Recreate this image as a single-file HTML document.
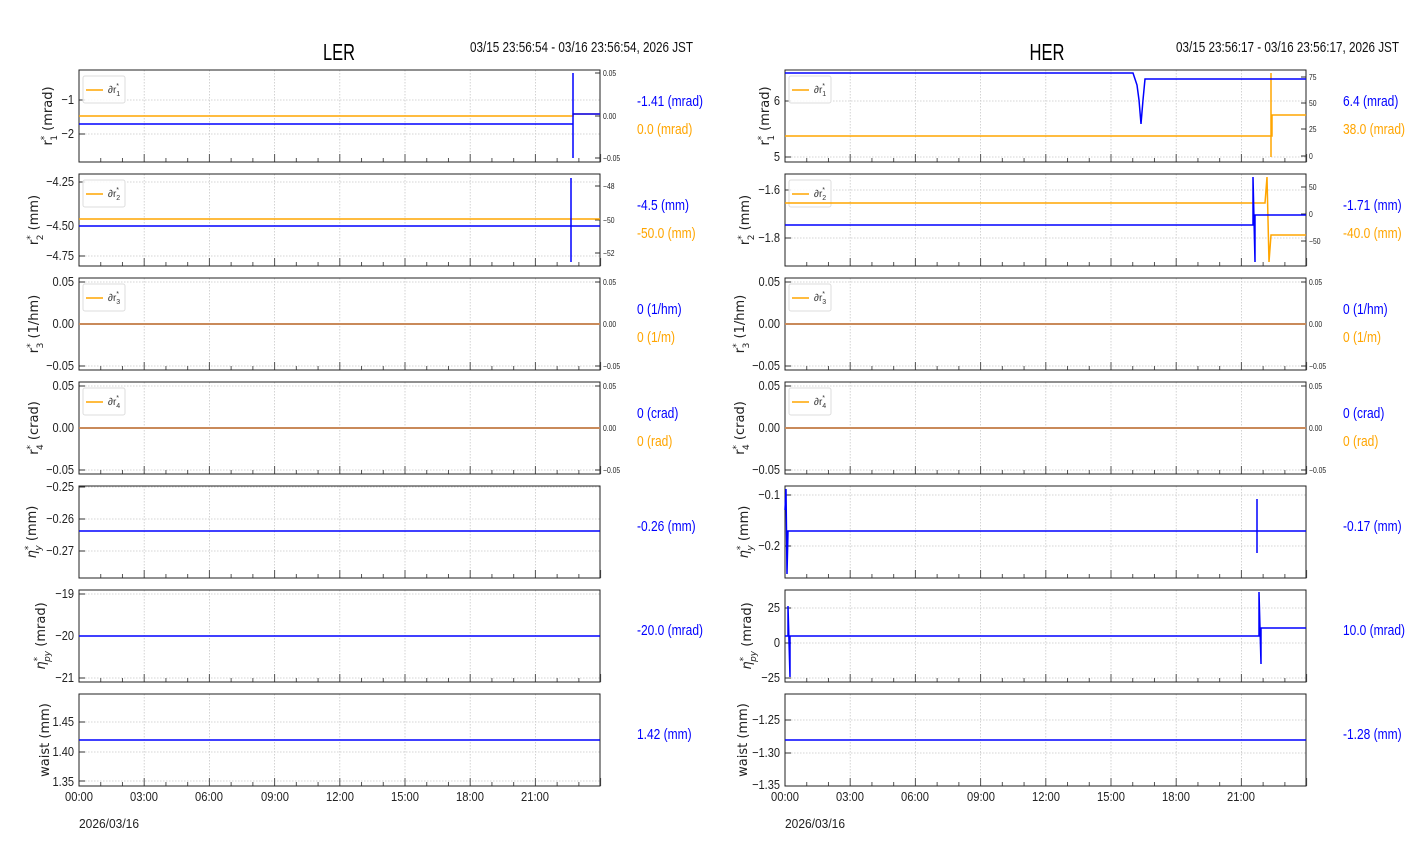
<!DOCTYPE html>
<html><head><meta charset="utf-8">
<style>
html,body{margin:0;padding:0;background:#fff;}
svg{display:block;}
.t{font-family:"Liberation Sans",sans-serif;font-size:13px;fill:#222;}
.s{font-family:"Liberation Sans",sans-serif;font-size:8px;fill:#222;}
.yl{font-family:"DejaVu Sans","Liberation Sans",sans-serif;font-size:13px;fill:#222;}
.v{font-family:"Liberation Sans",sans-serif;font-size:15px;}
.ti{font-family:"Liberation Sans",sans-serif;font-size:23px;fill:#000;}
.hd{font-family:"Liberation Sans",sans-serif;font-size:15px;fill:#111;}
.lg{font-family:"Liberation Sans",sans-serif;font-size:10px;fill:#333;}
.b{fill:none;stroke:#0000ff;stroke-width:1.5;}
.o{fill:none;stroke:#ffa500;stroke-width:1.5;}
</style></head><body>
<svg id="s" width="1412" height="864" viewBox="0 0 1412 864" xmlns="http://www.w3.org/2000/svg">
<g id="grid"></g>

<!-- titles -->
<text class="ti" x="339" y="60" text-anchor="middle" textLength="32" lengthAdjust="spacingAndGlyphs">LER</text>
<text class="hd" x="693" y="52" text-anchor="end" textLength="223" lengthAdjust="spacingAndGlyphs">03/15 23:56:54 - 03/16 23:56:54, 2026 JST</text>
<text class="ti" x="1047" y="60" text-anchor="middle" textLength="35" lengthAdjust="spacingAndGlyphs">HER</text>
<text class="hd" x="1399" y="52" text-anchor="end" textLength="223" lengthAdjust="spacingAndGlyphs">03/15 23:56:17 - 03/16 23:56:17, 2026 JST</text>

<!-- LEFT data -->
<path class="o" d="M79 116H573V114H600"/>
<path class="b" d="M79 124H573V73V158V114H600"/>
<path class="o" d="M79 219H600"/>
<path class="b" d="M79 226H571V178V262V226H600"/>
<path d="M79 324H600" stroke="#c98a5a" stroke-width="2"/>
<path d="M79 428H600" stroke="#c98a5a" stroke-width="2"/>
<path class="b" d="M79 531H600"/>
<path class="b" d="M79 636H600"/>
<path class="b" d="M79 740H600"/>

<!-- RIGHT data -->
<path class="o" d="M785 136H1271V73V157V136H1272V115H1306"/>
<path class="b" d="M785 73H1133L1137 85L1139 100L1141 124L1143 100L1145 79H1306"/>
<path class="o" d="M785 203H1265L1267 177L1269 262L1271 235H1306"/>
<path class="b" d="M785 225H1253V177L1255 262V215H1306"/>
<path d="M785 324H1306" stroke="#c98a5a" stroke-width="2"/>
<path d="M785 428H1306" stroke="#c98a5a" stroke-width="2"/>
<path class="b" d="M785 510L786 489L787 574L788 531H1257V499V553V531H1306"/>
<path class="b" d="M785 636H788V606L790 677V636H1259V592L1261 664V628H1306"/>
<path class="b" d="M785 740H1306"/>

<!-- LEFT y tick labels -->
<g class="t" text-anchor="end" transform="translate(74,0) scale(0.85,1) translate(-74,0)">
<text x="74" y="104">−1</text><text x="74" y="138">−2</text>
<text x="74" y="186">−4.25</text><text x="74" y="230">−4.50</text><text x="74" y="260">−4.75</text>
<text x="74" y="286">0.05</text><text x="74" y="328">0.00</text><text x="74" y="370">−0.05</text>
<text x="74" y="390">0.05</text><text x="74" y="432">0.00</text><text x="74" y="474">−0.05</text>
<text x="74" y="491">−0.25</text><text x="74" y="523">−0.26</text><text x="74" y="555">−0.27</text>
<text x="74" y="598">−19</text><text x="74" y="640">−20</text><text x="74" y="682">−21</text>
<text x="74" y="726">1.45</text><text x="74" y="756">1.40</text><text x="74" y="786">1.35</text>
</g>
<g class="s" transform="translate(603,0) scale(0.85,1) translate(-603,0)">
<text x="603" y="76">0.05</text><text x="603" y="119">0.00</text><text x="603" y="161">−0.05</text>
<text x="603" y="189">−48</text><text x="603" y="223">−50</text><text x="603" y="256">−52</text>
<text x="603" y="285">0.05</text><text x="603" y="327">0.00</text><text x="603" y="369">−0.05</text>
<text x="603" y="389">0.05</text><text x="603" y="431">0.00</text><text x="603" y="473">−0.05</text>
</g>
<!-- RIGHT y tick labels -->
<g class="t" text-anchor="end" transform="translate(780,0) scale(0.85,1) translate(-780,0)">
<text x="780" y="105">6</text><text x="780" y="161">5</text>
<text x="780" y="194">−1.6</text><text x="780" y="242">−1.8</text>
<text x="780" y="286">0.05</text><text x="780" y="328">0.00</text><text x="780" y="370">−0.05</text>
<text x="780" y="390">0.05</text><text x="780" y="432">0.00</text><text x="780" y="474">−0.05</text>
<text x="780" y="499">−0.1</text><text x="780" y="550">−0.2</text>
<text x="780" y="612">25</text><text x="780" y="647">0</text><text x="780" y="682">−25</text>
<text x="780" y="724">−1.25</text><text x="780" y="757">−1.30</text><text x="780" y="789">−1.35</text>
</g>
<g class="s" transform="translate(1309,0) scale(0.85,1) translate(-1309,0)">
<text x="1309" y="80">75</text><text x="1309" y="106">50</text><text x="1309" y="132">25</text><text x="1309" y="159">0</text>
<text x="1309" y="190">50</text><text x="1309" y="217">0</text><text x="1309" y="244">−50</text>
<text x="1309" y="285">0.05</text><text x="1309" y="327">0.00</text><text x="1309" y="369">−0.05</text>
<text x="1309" y="389">0.05</text><text x="1309" y="431">0.00</text><text x="1309" y="473">−0.05</text>
</g>

<!-- y axis labels -->
<g class="yl" text-anchor="middle">
<text transform="translate(52,116) rotate(-90)">r<tspan dy="-5" font-size="9">*</tspan><tspan dy="10" dx="-5" font-size="9">1</tspan><tspan dy="-5"> (mrad)</tspan></text>
<text transform="translate(38,220) rotate(-90)">r<tspan dy="-5" font-size="9">*</tspan><tspan dy="10" dx="-5" font-size="9">2</tspan><tspan dy="-5"> (mm)</tspan></text>
<text transform="translate(38,324) rotate(-90)">r<tspan dy="-5" font-size="9">*</tspan><tspan dy="10" dx="-5" font-size="9">3</tspan><tspan dy="-5"> (1/hm)</tspan></text>
<text transform="translate(38,428) rotate(-90)">r<tspan dy="-5" font-size="9">*</tspan><tspan dy="10" dx="-5" font-size="9">4</tspan><tspan dy="-5"> (crad)</tspan></text>
<text transform="translate(36,532) rotate(-90)"><tspan font-style="italic">η</tspan><tspan dy="-5" font-size="9">*</tspan><tspan dy="10" dx="-5" font-size="9" font-style="italic">y</tspan><tspan dy="-5"> (mm)</tspan></text>
<text transform="translate(45,636) rotate(-90)"><tspan font-style="italic">η</tspan><tspan dy="-5" font-size="9">*</tspan><tspan dy="10" dx="-5" font-size="9" font-style="italic">py</tspan><tspan dy="-5"> (mrad)</tspan></text>
<text transform="translate(49,740) rotate(-90)">waist (mm)</text>

<text transform="translate(769,116) rotate(-90)">r<tspan dy="-5" font-size="9">*</tspan><tspan dy="10" dx="-5" font-size="9">1</tspan><tspan dy="-5"> (mrad)</tspan></text>
<text transform="translate(749,220) rotate(-90)">r<tspan dy="-5" font-size="9">*</tspan><tspan dy="10" dx="-5" font-size="9">2</tspan><tspan dy="-5"> (mm)</tspan></text>
<text transform="translate(744,324) rotate(-90)">r<tspan dy="-5" font-size="9">*</tspan><tspan dy="10" dx="-5" font-size="9">3</tspan><tspan dy="-5"> (1/hm)</tspan></text>
<text transform="translate(744,428) rotate(-90)">r<tspan dy="-5" font-size="9">*</tspan><tspan dy="10" dx="-5" font-size="9">4</tspan><tspan dy="-5"> (crad)</tspan></text>
<text transform="translate(748,532) rotate(-90)"><tspan font-style="italic">η</tspan><tspan dy="-5" font-size="9">*</tspan><tspan dy="10" dx="-5" font-size="9" font-style="italic">y</tspan><tspan dy="-5"> (mm)</tspan></text>
<text transform="translate(751,636) rotate(-90)"><tspan font-style="italic">η</tspan><tspan dy="-5" font-size="9">*</tspan><tspan dy="10" dx="-5" font-size="9" font-style="italic">py</tspan><tspan dy="-5"> (mrad)</tspan></text>
<text transform="translate(747,740) rotate(-90)">waist (mm)</text>
</g>

<!-- legends text -->
<g class="lg">
<text x="108" y="93">∂r<tspan dy="3" font-size="7">1</tspan><tspan dy="-8" dx="-4" font-size="7">*</tspan></text>
<text x="108" y="197">∂r<tspan dy="3" font-size="7">2</tspan><tspan dy="-8" dx="-4" font-size="7">*</tspan></text>
<text x="108" y="301">∂r<tspan dy="3" font-size="7">3</tspan><tspan dy="-8" dx="-4" font-size="7">*</tspan></text>
<text x="108" y="405">∂r<tspan dy="3" font-size="7">4</tspan><tspan dy="-8" dx="-4" font-size="7">*</tspan></text>
<text x="814" y="93">∂r<tspan dy="3" font-size="7">1</tspan><tspan dy="-8" dx="-4" font-size="7">*</tspan></text>
<text x="814" y="197">∂r<tspan dy="3" font-size="7">2</tspan><tspan dy="-8" dx="-4" font-size="7">*</tspan></text>
<text x="814" y="301">∂r<tspan dy="3" font-size="7">3</tspan><tspan dy="-8" dx="-4" font-size="7">*</tspan></text>
<text x="814" y="405">∂r<tspan dy="3" font-size="7">4</tspan><tspan dy="-8" dx="-4" font-size="7">*</tspan></text>
</g>

<!-- value labels -->
<g class="v" transform="translate(637,0) scale(0.8,1) translate(-637,0)">
<text x="637" y="106" fill="#0000ff">-1.41 (mrad)</text><text x="637" y="134" fill="#ffa500">0.0 (mrad)</text>
<text x="637" y="210" fill="#0000ff">-4.5 (mm)</text><text x="637" y="238" fill="#ffa500">-50.0 (mm)</text>
<text x="637" y="314" fill="#0000ff">0 (1/hm)</text><text x="637" y="342" fill="#ffa500">0 (1/m)</text>
<text x="637" y="418" fill="#0000ff">0 (crad)</text><text x="637" y="446" fill="#ffa500">0 (rad)</text>
<text x="637" y="531" fill="#0000ff">-0.26 (mm)</text>
<text x="637" y="635" fill="#0000ff">-20.0 (mrad)</text>
<text x="637" y="739" fill="#0000ff">1.42 (mm)</text>
</g>
<g class="v" transform="translate(1343,0) scale(0.8,1) translate(-1343,0)">
<text x="1343" y="106" fill="#0000ff">6.4 (mrad)</text><text x="1343" y="134" fill="#ffa500">38.0 (mrad)</text>
<text x="1343" y="210" fill="#0000ff">-1.71 (mm)</text><text x="1343" y="238" fill="#ffa500">-40.0 (mm)</text>
<text x="1343" y="314" fill="#0000ff">0 (1/hm)</text><text x="1343" y="342" fill="#ffa500">0 (1/m)</text>
<text x="1343" y="418" fill="#0000ff">0 (crad)</text><text x="1343" y="446" fill="#ffa500">0 (rad)</text>
<text x="1343" y="531" fill="#0000ff">-0.17 (mm)</text>
<text x="1343" y="635" fill="#0000ff">10.0 (mrad)</text>
<text x="1343" y="739" fill="#0000ff">-1.28 (mm)</text>
</g>

<!-- x tick labels -->
<g class="t" text-anchor="middle">
<text x="79" y="801" textLength="28" lengthAdjust="spacingAndGlyphs">00:00</text><text x="144" y="801" textLength="28" lengthAdjust="spacingAndGlyphs">03:00</text><text x="209" y="801" textLength="28" lengthAdjust="spacingAndGlyphs">06:00</text><text x="275" y="801" textLength="28" lengthAdjust="spacingAndGlyphs">09:00</text><text x="340" y="801" textLength="28" lengthAdjust="spacingAndGlyphs">12:00</text><text x="405" y="801" textLength="28" lengthAdjust="spacingAndGlyphs">15:00</text><text x="470" y="801" textLength="28" lengthAdjust="spacingAndGlyphs">18:00</text><text x="535" y="801" textLength="28" lengthAdjust="spacingAndGlyphs">21:00</text>
<text x="785" y="801" textLength="28" lengthAdjust="spacingAndGlyphs">00:00</text><text x="850" y="801" textLength="28" lengthAdjust="spacingAndGlyphs">03:00</text><text x="915" y="801" textLength="28" lengthAdjust="spacingAndGlyphs">06:00</text><text x="981" y="801" textLength="28" lengthAdjust="spacingAndGlyphs">09:00</text><text x="1046" y="801" textLength="28" lengthAdjust="spacingAndGlyphs">12:00</text><text x="1111" y="801" textLength="28" lengthAdjust="spacingAndGlyphs">15:00</text><text x="1176" y="801" textLength="28" lengthAdjust="spacingAndGlyphs">18:00</text><text x="1241" y="801" textLength="28" lengthAdjust="spacingAndGlyphs">21:00</text>
</g>
<text class="t" x="79" y="828" font-size="15" textLength="60" lengthAdjust="spacingAndGlyphs">2026/03/16</text>
<text class="t" x="785" y="828" font-size="15" textLength="60" lengthAdjust="spacingAndGlyphs">2026/03/16</text>
</svg>
<script>
(function(){
var g=document.getElementById('grid'),h='';
var L={
0:[[100,134],[73,116,158]],1:[[182,226,256],[186,220,253]],2:[[282,324,366],[282,324,366]],3:[[386,428,470],[386,428,470]],
4:[[487,519,551],null],5:[[594,636,678],null],6:[[722,752,781],null]};
var R={
0:[[101,157],[77,103,129,156]],1:[[190,238],[187,214,241]],2:[[282,324,366],[282,324,366]],3:[[386,428,470],[386,428,470]],
4:[[495,546],null],5:[[608,643,678],null],6:[[720,753,786],null]};
function panel(x0,y0,T){
 var x1=x0+521,y1=y0+92,i,x;
 for(i=1;i<8;i++){x=x0+i*521.6/8;h+='<line x1="'+x+'" y1="'+y0+'" x2="'+x+'" y2="'+y1+'" stroke="#c8c8c8" stroke-width="0.8" stroke-dasharray="1.5,1.5"/>';}
 T[0].forEach(function(y){h+='<line x1="'+x0+'" y1="'+y+'" x2="'+x1+'" y2="'+y+'" stroke="#c8c8c8" stroke-width="0.8" stroke-dasharray="1.5,1.5"/><line x1="'+x0+'" y1="'+y+'" x2="'+(x0+6)+'" y2="'+y+'" stroke="#333"/>';});
 if(T[1])T[1].forEach(function(y){h+='<line x1="'+(x1-5)+'" y1="'+y+'" x2="'+x1+'" y2="'+y+'" stroke="#333"/>';});
 for(i=0;i<=24;i++){x=x0+i*521.6/24;var len=(i%3==0)?8:4;h+='<line x1="'+x+'" y1="'+(y1-len)+'" x2="'+x+'" y2="'+y1+'" stroke="#555"/>';}
 h+='<rect x="'+x0+'" y="'+y0+'" width="521" height="92" fill="none" stroke="#222" stroke-width="1"/>';
}
for(var k=0;k<7;k++){panel(79,70+104*k,L[k]);panel(785,70+104*k,R[k]);}
for(k=0;k<4;k++){[83,789].forEach(function(x){var y=76+104*k;
 h+='<rect x="'+x+'" y="'+y+'" width="42" height="27" rx="2" fill="#fff" fill-opacity="0.85" stroke="#ddd"/>';
 h+='<line x1="'+(x+3)+'" y1="'+(y+14)+'" x2="'+(x+20)+'" y2="'+(y+14)+'" stroke="#ffa500" stroke-width="1.5"/>';});}
g.innerHTML=h;
})();
</script>
</body></html>
